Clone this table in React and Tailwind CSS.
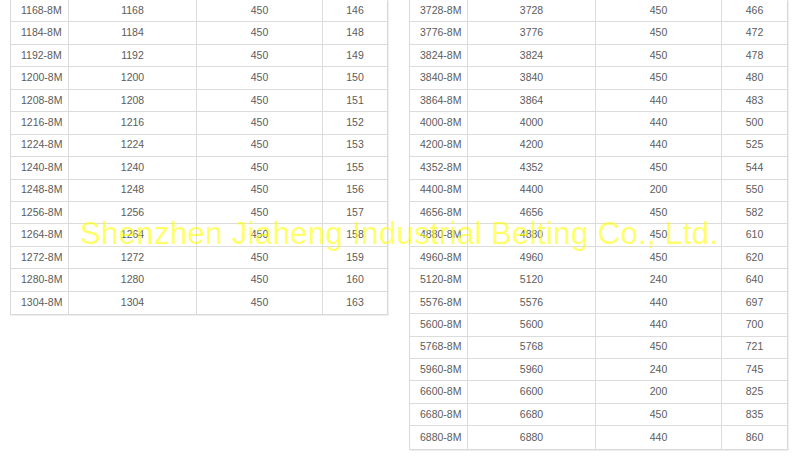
const left = [
  ["1168-8M", "1168", "450", "146"],
  ["1184-8M", "1184", "450", "148"],
  ["1192-8M", "1192", "450", "149"],
  ["1200-8M", "1200", "450", "150"],
  ["1208-8M", "1208", "450", "151"],
  ["1216-8M", "1216", "450", "152"],
  ["1224-8M", "1224", "450", "153"],
  ["1240-8M", "1240", "450", "155"],
  ["1248-8M", "1248", "450", "156"],
  ["1256-8M", "1256", "450", "157"],
  ["1264-8M", "1264", "450", "158"],
  ["1272-8M", "1272", "450", "159"],
  ["1280-8M", "1280", "450", "160"],
  ["1304-8M", "1304", "450", "163"],
];

const right = [
  ["3728-8M", "3728", "450", "466"],
  ["3776-8M", "3776", "450", "472"],
  ["3824-8M", "3824", "450", "478"],
  ["3840-8M", "3840", "450", "480"],
  ["3864-8M", "3864", "440", "483"],
  ["4000-8M", "4000", "440", "500"],
  ["4200-8M", "4200", "440", "525"],
  ["4352-8M", "4352", "450", "544"],
  ["4400-8M", "4400", "200", "550"],
  ["4656-8M", "4656", "450", "582"],
  ["4880-8M", "4880", "450", "610"],
  ["4960-8M", "4960", "450", "620"],
  ["5120-8M", "5120", "240", "640"],
  ["5576-8M", "5576", "440", "697"],
  ["5600-8M", "5600", "440", "700"],
  ["5768-8M", "5768", "450", "721"],
  ["5960-8M", "5960", "240", "745"],
  ["6600-8M", "6600", "200", "825"],
  ["6680-8M", "6680", "450", "835"],
  ["6880-8M", "6880", "440", "860"],
];

function BeltTable({ rows }) {
  return (
    <div className="border border-[#d9d9d9] border-t-0 shadow-[1px_1px_0_#efefef]">
      {rows.map((r, i) => (
        <div
          key={i}
          className={`grid grid-cols-[58px_128px_126px_1fr] h-[22.45px] items-center ${i < rows.length - 1 ? "border-b border-[#dcdcdc]" : ""}`}
        >
          <div className="h-full flex items-center pl-[10px] border-r border-[#dcdcdc]">{r[0]}</div>
          <div className="h-full flex items-center justify-center border-r border-[#dcdcdc]">{r[1]}</div>
          <div className="h-full flex items-center justify-center border-r border-[#dcdcdc]">{r[2]}</div>
          <div className="h-full flex items-center justify-center">{r[3]}</div>
        </div>
      ))}
    </div>
  );
}

export default function App() {
  return (
    <div
      className="relative w-[800px] h-[467px] bg-white overflow-hidden text-[10.5px] text-[#5c5c5c]"
      style={{ fontFamily: "'Liberation Sans', Arial, sans-serif" }}
    >
      <div className="flex items-start pl-[10px] gap-[21px]">
        <div className="w-[378px]">
          <BeltTable rows={left} />
        </div>
        <div className="w-[379px]">
          <BeltTable rows={right} />
        </div>
      </div>
      {/* watermark */}
      <div className="absolute left-[80px] top-[216px] text-[31px] leading-[36px] tracking-[0.4px] text-[#ffff00]/60 whitespace-nowrap pointer-events-none">
        Shenzhen Jiaheng Industrial Belting Co., Ltd.
      </div>
    </div>
  );
}
